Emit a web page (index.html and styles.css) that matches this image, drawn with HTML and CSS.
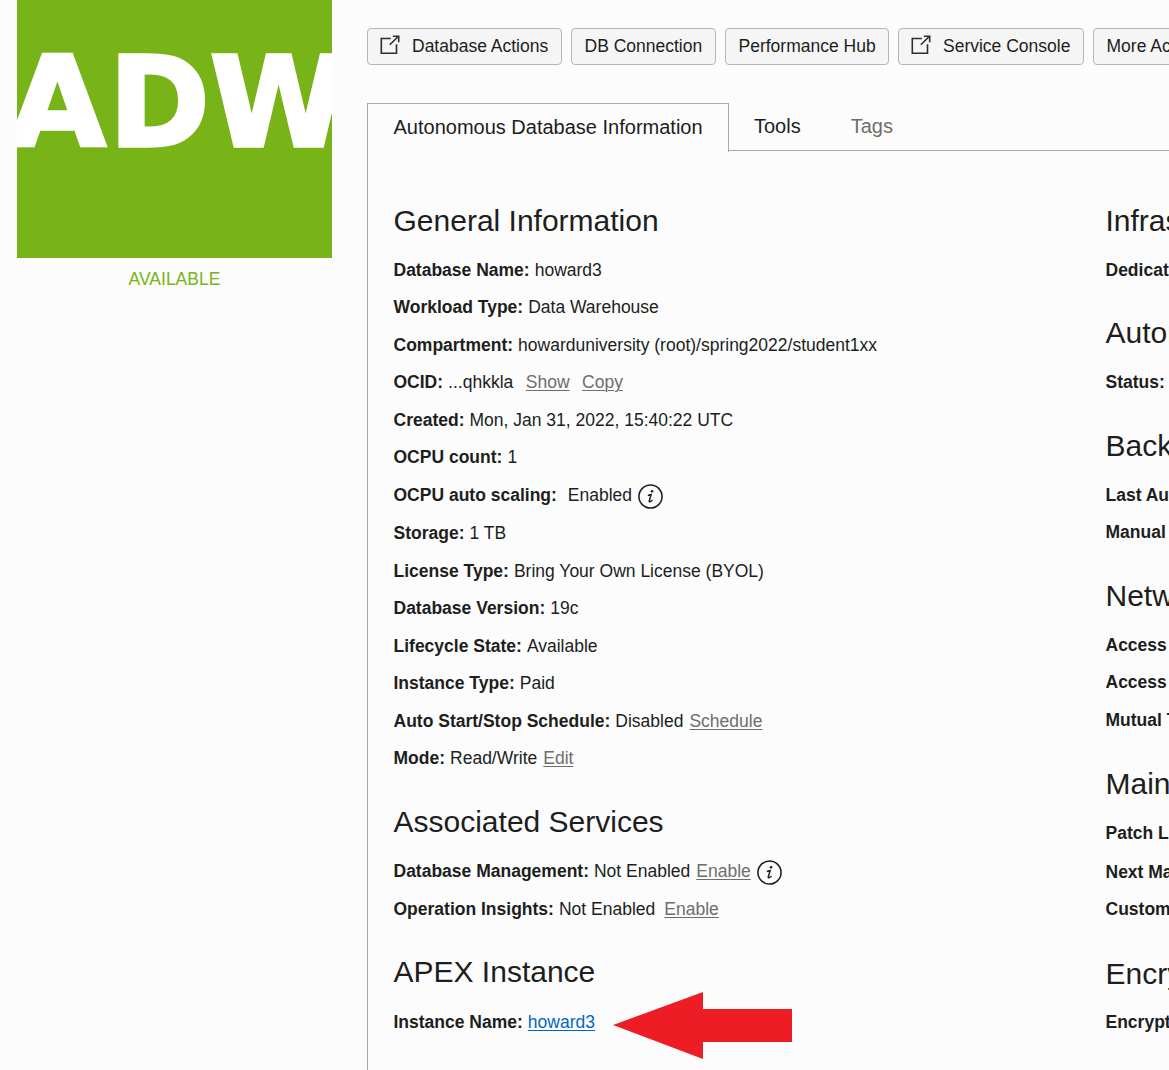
FILE: index.html
```
<!DOCTYPE html>
<html lang="en">
<head>
<meta charset="utf-8">
<title>Autonomous Database Details</title>
<link rel="stylesheet" href="styles.css">
</head>
<body>
<svg class="defs" aria-hidden="true">
  <symbol id="external" viewBox="0 0 20 20"><path d="M10.8 3.5H1.3V18.3H16.5V9.2M9.8 9.8L18.5 1.2M12.8 1.3H18.7V7.2" fill="none" stroke="#302e2c" stroke-width="1.6"/></symbol>
  <symbol id="info" viewBox="0 0 24 24"><circle cx="12" cy="12" r="11.1" fill="none" stroke="#201e1c" stroke-width="1.5"/><circle cx="13.5" cy="6.9" r="1.2" fill="#201e1c"/><path d="M9.4 11L12.6 10.2L10.8 16.3Q10.6 18.4 14 15.4" fill="none" stroke="#201e1c" stroke-width="1.4"/></symbol>
</svg>
<div class="page">
  <aside class="side">
    <div class="badge"><div class="badge-text"><span class="loose">A</span><span class="narrow">D</span>W</div></div>
    <div class="state">AVAILABLE</div>
  </aside>
  <main class="main">
    <div class="actions">
      <button class="btn w-actions"><svg class="ext"><use href="#external"/></svg>Database Actions</button>
      <button class="btn w-conn">DB Connection</button>
      <button class="btn w-perf">Performance Hub</button>
      <button class="btn w-console"><svg class="ext"><use href="#external"/></svg>Service Console</button>
      <button class="btn w-more">More Actions</button>
    </div>
    <nav class="tabs">
      <a class="tab active">Autonomous Database Information</a>
      <div class="tabs-rest"><a class="tab">Tools</a><a class="tab muted">Tags</a></div>
    </nav>
    <div class="panel">
      <div class="col first">
        <section>
          <h2>General Information</h2>
          <p><b>Database Name:</b> howard3</p>
          <p><b>Workload Type:</b> Data Warehouse</p>
          <p><b>Compartment:</b> howarduniversity (root)/spring2022/student1xx</p>
          <p><b>OCID:</b> ...qhkkla <a class="wide">Show</a> <a class="wide">Copy</a></p>
          <p><b>Created:</b> Mon, Jan 31, 2022, 15:40:22 UTC</p>
          <p><b>OCPU count:</b> 1</p>
          <p class="tall"><b>OCPU auto scaling:</b> <span class="value">Enabled</span><svg class="info"><use href="#info"/></svg></p>
          <p><b>Storage:</b> 1 TB</p>
          <p><b>License Type:</b> Bring Your Own License (BYOL)</p>
          <p><b>Database Version:</b> 19c</p>
          <p><b>Lifecycle State:</b> Available</p>
          <p><b>Instance Type:</b> Paid</p>
          <p><b>Auto Start/Stop Schedule:</b> Disabled <a class="nudge">Schedule</a></p>
          <p><b>Mode:</b> Read/Write <a class="nudge">Edit</a></p>
        </section>
        <section class="snug">
          <h2>Associated Services</h2>
          <p class="tall"><b>Database Management:</b> Not Enabled <a class="nudge">Enable</a><svg class="info"><use href="#info"/></svg></p>
          <p><b>Operation Insights:</b> Not Enabled <a class="mid">Enable</a></p>
        </section>
        <section class="last">
          <h2>APEX Instance</h2>
          <p><b>Instance Name:</b> <a class="blue">howard3</a></p>
        </section>
      </div>
      <div class="col">
        <section>
          <h2>Infrastructure</h2>
          <p><b>Dedicated Infrastructure:</b></p>
        </section>
        <section>
          <h2>Autonomous Data Guard</h2>
          <p><b>Status:</b></p>
        </section>
        <section>
          <h2>Backup</h2>
          <p><b>Last Automatic Backup:</b></p>
          <p><b>Manual Backup Store:</b></p>
        </section>
        <section class="roomy">
          <h2>Network</h2>
          <p><b>Access Type:</b></p>
          <p><b>Access Control List:</b></p>
          <p><b>Mutual TLS (mTLS):</b></p>
        </section>
        <section class="roomy">
          <h2>Maintenance</h2>
          <p class="tall"><b>Patch Level:</b></p>
          <p><b>Next Maintenance:</b></p>
          <p><b>Customer Contacts:</b></p>
        </section>
        <section>
          <h2>Encryption</h2>
          <p><b>Encryption Key:</b></p>
        </section>
      </div>
    </div>
  </main>
</div>
<svg class="arrow" viewBox="0 0 179 67"><path d="M0 33L90 0V17H179V50H90V67Z" fill="#ee1c24"/></svg>
</body>
</html>
```
FILE: styles.css
```
* { box-sizing: border-box; }
body {
  margin: 0;
  width: 1169px;
  height: 1070px;
  overflow: hidden;
  background: #fcfcfc;
  color: #201e1c;
  font: 17.5px/37.5px "Liberation Sans", Arial, sans-serif;
}
.defs { position: absolute; width: 0; height: 0; }
.page { display: flex; height: 1070px; }
.side { flex: none; width: 367px; padding-left: 17px; }
.badge {
  width: 315px;
  height: 258px;
  background: #78b417;
  overflow: hidden;
  display: flex;
}
.badge-text {
  flex: none;
  margin-left: -8px;
  color: #fff;
  font: 700 125px/206px "DejaVu Sans", sans-serif;
  font-kerning: none;
  -webkit-text-stroke: 3.5px #fff;
}
.loose { letter-spacing: 2.8px; }
.narrow { display: inline-block; margin-right: -2.5px; transform: scaleX(0.97); transform-origin: 0 50%; }
.state { width: 315px; text-align: center; color: #78b417; padding-top: 3px; }
.main { flex: none; width: 802px; padding-top: 28px; display: flex; flex-direction: column; overflow: hidden; }
.actions { display: flex; gap: 9px; height: 37px; }
.btn {
  flex: none;
  display: flex;
  align-items: center;
  padding: 0 0 0 12.5px;
  border: 1px solid #b3b5c0;
  border-radius: 4px;
  background: #f5f5f5;
  color: #201e1c;
  font: inherit;
  line-height: 33px;
  white-space: nowrap;
}
.w-actions { width: 195px; }
.w-conn { width: 145px; }
.w-perf { width: 164px; }
.w-console { width: 186px; }
.w-more { width: 144px; }
.ext { width: 20px; height: 20px; margin: 0 11.7px 4px -0.2px; }
.tabs { display: flex; height: 49px; margin-top: 38px; font-size: 20px; }
.tab { flex: none; line-height: 46px; }
.tab.active {
  width: 362px;
  padding-left: 25.5px;
  border: 1px solid #a9a9a9;
  border-bottom: 0;
}
.tabs-rest { flex: 1; height: 48px; display: flex; gap: 50px; padding-left: 25px; border-bottom: 1px solid #a9a9a9; }
.muted { color: #6f6d6b; }
.panel { flex: 1; display: flex; border-left: 1px solid #a9a9a9; padding: 49.8px 0 0 25.5px; }
.col { flex: none; width: 400px; }
.col.first { width: 712px; }
section { padding-bottom: 25.2px; white-space: nowrap; }
section.roomy { padding-bottom: 26px; }
section.snug { padding-bottom: 24.4px; }
h2 { margin: 0 0 12.3px; font-size: 30px; font-weight: 400; line-height: 37.5px; }
.last h2 { margin-bottom: 13.1px; }
p { margin: 0; height: 37.5px; display: flex; gap: 5px; }
p.tall { height: 38.7px; }
a { text-underline-offset: 2px; }
p a { color: #6f6d6b; text-decoration: underline; text-decoration-thickness: 1px; }
p .blue { color: #0067c5; }
.wide { margin-left: 7.5px; }
.value { margin-left: 6px; }
.nudge { margin-left: 1px; }
.mid { margin-left: 4px; }
.info { width: 25px; height: 25px; margin: 7.3px 0 0 0.8px; }
.arrow { position: absolute; left: 613px; top: 992px; width: 179px; height: 67px; }
```
